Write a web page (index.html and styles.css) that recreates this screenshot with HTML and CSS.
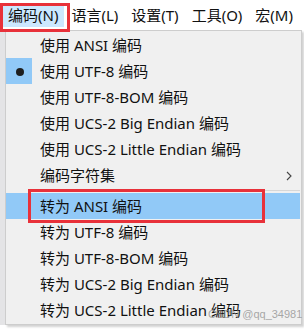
FILE: index.html
```html
<!DOCTYPE html>
<html lang="zh-CN">
<head>
    <meta charset="UTF-8">
    <title>编码菜单</title>
    <link rel="stylesheet" href="styles.css">
</head>
<body>
    <div class="menubar">
        <span class="menubar-item active">编码(N)</span>
        <span class="menubar-item">语言(L)</span>
        <span class="menubar-item">设置(T)</span>
        <span class="menubar-item">工具(O)</span>
        <span class="menubar-item">宏(M)</span>
    </div>

    <div class="workspace">
        <div class="gutter"></div>
        <div class="popup">
            <div class="item">使用 ANSI 编码</div>
            <div class="item checked"><span class="bullet"></span>使用 UTF-8 编码</div>
            <div class="item">使用 UTF-8-BOM 编码</div>
            <div class="item">使用 UCS-2 Big Endian 编码</div>
            <div class="item">使用 UCS-2 Little Endian 编码</div>
            <div class="item submenu">编码字符集
                <svg class="arrow" width="6" height="10" viewBox="0 0 6 10"><path d="M1 1 L5 5 L1 9" fill="none" stroke="#444" stroke-width="1.1"/></svg>
            </div>
            <div class="separator"></div>
            <div class="item hover">转为 ANSI 编码</div>
            <div class="item">转为 UTF-8 编码</div>
            <div class="item">转为 UTF-8-BOM 编码</div>
            <div class="item">转为 UCS-2 Big Endian 编码</div>
            <div class="item">转为 UCS-2 Little Endian 编码</div>
        </div>
    </div>

    <!-- red annotation boxes -->
    <div class="mark mark-menu"></div>
    <div class="mark mark-ansi"></div>
    <div class="watermark">CSDN @qq_34981</div>
</body>
</html>
```

FILE: styles.css
```css
body {
    margin: 0;
    background: #fff;
    font-family: "Noto Sans", "Noto Sans CJK SC", sans-serif;
    font-size: 15px;
    color: #111;
    position: relative;
    width: 304px;
    height: 329px;
    overflow: hidden;
}
.menubar {
    height: 30px;
    display: flex;
    align-items: center;
    padding-left: 2px;
}
.menubar-item {
    flex-shrink: 0;
    white-space: nowrap;
    height: 24px;
    line-height: 24px;
    padding: 0 6px;
    margin-right: 1px;
}
.menubar-item.active {
    background: #cce8ff;
}
.workspace {
    display: flex;
}
.gutter {
    width: 5px;
    height: 295px;
    background: #e4e4e6;
}
.popup {
    width: 297px;
    box-sizing: border-box;
    background: #f0f0f0;
    border: 1px solid #cdcdcd;
    padding: 1px 1px 1px 0;
    box-shadow: 2px 2px 2px rgba(0, 0, 0, 0.18);
}
.item {
    height: 26px;
    line-height: 26px;
    padding-left: 34px;
    position: relative;
    white-space: nowrap;
}
.item.checked::before {
    content: "";
    position: absolute;
    left: 0;
    top: 0;
    width: 26px;
    height: 26px;
    background: #91c9f7;
}
.bullet {
    position: absolute;
    left: 10px;
    top: 10px;
    width: 8px;
    height: 8px;
    border-radius: 50%;
    background: #1e1e1e;
}
.item.hover {
    background: #91c9f7;
}
.arrow {
    position: absolute;
    right: 8px;
    top: 9px;
}
.separator {
    height: 1px;
    background: #d7d7d7;
    margin: 2px 0 2px 34px;
}
.mark {
    position: absolute;
    border: 3px solid #e8313a;
    box-sizing: border-box;
}
.mark-menu {
    left: 0;
    top: 3px;
    width: 70px;
    height: 29px;
}
.mark-ansi {
    left: 28px;
    top: 189px;
    width: 237px;
    height: 34px;
}
.watermark {
    position: absolute;
    left: 208px;
    top: 308px;
    font-family: "Liberation Sans", sans-serif;
    font-size: 11px;
    color: rgba(140, 140, 140, 0.75);
}
```
